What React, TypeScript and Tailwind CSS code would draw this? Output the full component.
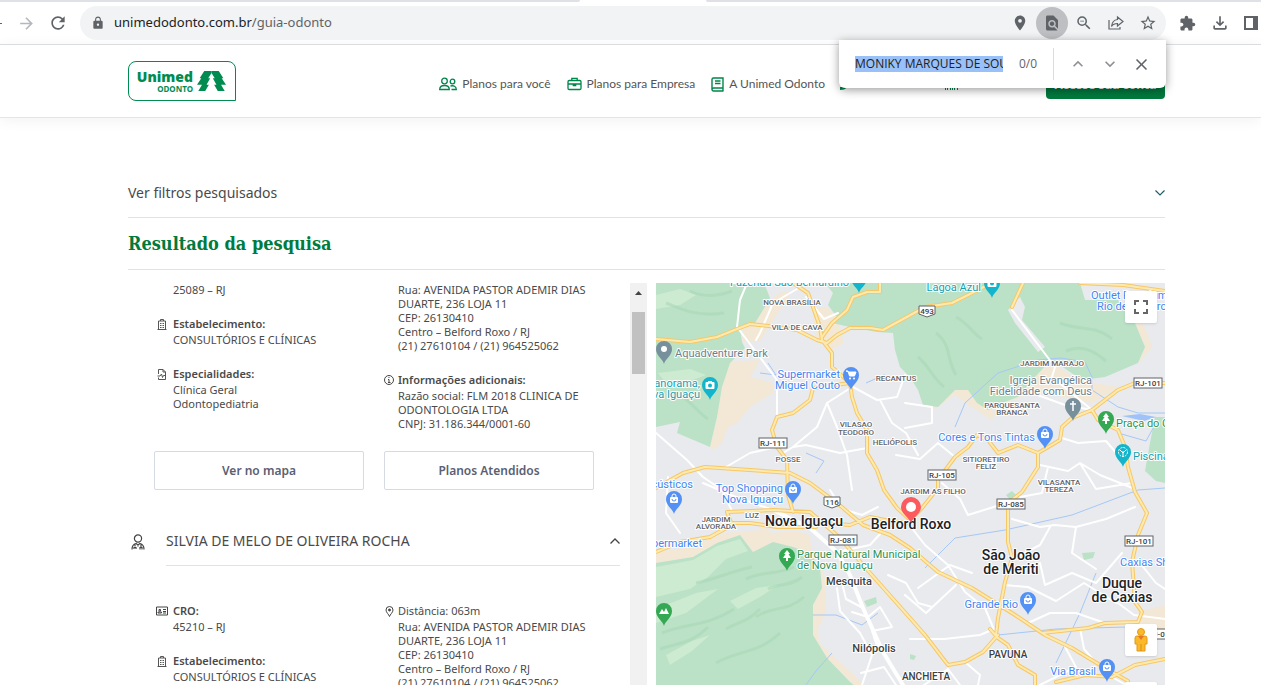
import type { ReactNode } from "react";
import {
  MdArrowForward,
  MdClose,
  MdExtension,
  MdFindInPage,
  MdFullscreen,
  MdKeyboardArrowDown,
  MdKeyboardArrowUp,
  MdLocationOn,
  MdLock,
  MdOutlineFileDownload,
  MdRefresh,
  MdStarBorder,
  MdZoomOut,
} from "react-icons/md";

const address = [
  "Rua: AVENIDA PASTOR ADEMIR DIAS",
  "DUARTE, 236 LOJA 11",
  "CEP: 26130410",
  "Centro – Belford Roxo / RJ",
  "(21) 27610104 / (21) 964525062",
];

const company = [
  "Razão social: FLM 2018 CLINICA DE",
  "ODONTOLOGIA LTDA",
  "CNPJ: 31.186.344/0001-60",
];

const greenAreas = [
  "M0 0H108L114 15L107 27L99 40L84 45L86 59L89 65L74 80L66 104L61 134L54 164L21 150L24 139L0 144Z",
  "M169 0L177 10L172 22L181 34L176 40L194 44L221 49L237 50L239 67L244 84L254 94L262 107L267 122L282 124L299 107L312 107L321 120L332 127L346 120L362 114L379 94L392 80L396 77L426 97L449 94L482 80L489 64L479 40L462 17L429 17L424 0Z",
  "M509 134L499 134L494 160L489 188L500 198L509 200Z",
  "M0 280L37 274L61 260L84 252L97 269L117 259L137 264L154 270L164 285L166 305L157 322L157 352L171 375L194 399L198 402H0Z",
  "M208 318L220 314L221 320L211 324Z",
  "M426 270L439 269L437 275L428 277Z",
  "M254 371L260 373L258 377L254 376Z",
  "M350 212L356 208L360 212L354 217Z",
];

const sandAreas = [
  "M72 79L104 77L94 94L117 100V110L94 124L81 140L72 144L66 160L57 167L54 164L61 134L66 104Z",
  "M88 45L107 27L122 10L136 8L122 30L104 58L86 59Z",
  "M156 24L172 25L181 34L188 60L176 66L160 55Z",
  "M269 120L316 100L322 117L339 130L336 137L316 124L299 112L279 126Z",
  "M376 94L396 80L422 97L462 104L436 120L409 114L376 110L349 120Z",
  "M479 40L489 64L482 82L496 64L488 42Z",
  "M0 270L31 264L71 250L104 247L107 238L115 250L140 248L154 252L155 268L168 290L170 330L162 345L163 360L185 380L208 402H198L171 375L157 352L157 322L166 305L164 285L154 270L137 264L117 259L97 269L84 252L61 260L37 274L0 280Z",
  "M480 330L509 322V352L484 345Z",
];

const lightAreas = [
  "M0 284L37 277L61 263L84 256L92 268L70 276L52 294L34 306L0 314Z",
  "M0 326L40 310L62 306L30 330L0 340Z",
  "M74 318L100 305L122 302L104 314L82 326Z",
  "M10 372L36 358L54 352L36 368L14 382Z",
  "M0 12L24 6L40 12L24 22L0 26Z",
  "M2 90L34 86L50 92L34 98L10 100Z",
];

const reliefLines = [
  "M6 350C30 340 50 344 78 326",
  "M40 300C60 296 76 288 96 284",
  "M60 380C84 366 100 372 124 350",
  "M100 334C116 322 130 330 148 314",
  "M90 296C106 288 120 292 138 284",
  "M4 366C20 360 34 362 52 344",
  "M70 346C84 338 90 340 104 326",
  "M112 306C122 300 134 304 146 294",
  "M20 110C34 116 42 130 52 136",
  "M10 20C26 26 40 34 68 30",
  "M34 8C46 14 60 14 76 8",
  "M280 50C296 62 290 76 300 92",
  "M262 74C274 84 276 94 288 104",
  "M300 34C312 40 318 52 326 56",
  "M404 40C424 48 440 42 456 56",
  "M410 68C424 62 436 66 450 78",
];

const whiteRoads = [
  "M91 0L84 17L81 44L91 57L121 97V134",
  "M141 6L117 20L104 50L100 57",
  "M196 104L171 120L161 144L137 164L127 170",
  "M171 120L181 144L191 172L196 207",
  "M197 104L221 117L241 114L249 92",
  "M224 117L236 140L250 150L262 172",
  "M211 165L184 170L150 162L137 164",
  "M0 150L31 177L47 194L66 207L76 228",
  "M70 184L94 170L121 164",
  "M12 194L10 230L24 250",
  "M47 200L80 214L117 227",
  "M249 120L276 124V140L249 145",
  "M299 174L282 160L264 176L240 172",
  "M356 27L399 84L396 94L436 127",
  "M406 155L422 160L450 158L462 172L469 176",
  "M384 182L412 188L424 180L444 192L479 206",
  "M376 110L409 122L436 127",
  "M150 14L168 36L182 30",
  "M181 269L214 262L234 240",
  "M181 305L184 328L204 350L216 372L206 402",
  "M196 329L212 334L224 324L236 344L216 348L222 366",
  "M205 390L228 384L240 402",
  "M174 207L186 226L206 232L222 224",
  "M255 244L269 262L292 282L309 309L329 325L339 349",
  "M262 305L294 282L316 290",
  "M249 312L270 330L300 302",
  "M254 356L288 356L324 352L338 346",
  "M286 200L304 216L312 232L344 222",
  "M356 236L384 244L399 242L420 244L416 270L440 286",
  "M359 275L384 262L394 244",
  "M420 244L450 236L479 224",
  "M384 280L389 302L416 290L440 300L466 270",
  "M349 302L372 304L400 318L428 300L460 320",
  "M372 340L394 330L420 330L449 340",
  "M424 345L428 366L440 380",
  "M462 320L478 332L509 336",
  "M392 184L386 210L364 214",
  "M424 180L440 206L476 200",
  "M384 402L420 384L408 362",
  "M268 402L292 386L304 402",
  "M309 379L324 392L322 402",
  "M484 280L500 300L509 306",
  "M456 394L470 402",
  "M232 292L250 300L262 320L276 324",
  "M207 325L190 316L186 300",
];

const yellowRoads = [
  "M0 56L34 59L61 54L81 46L94 41L121 44L141 47L161 57L171 60L181 52L194 45L214 45L227 47L249 35L269 24L296 20L322 7L335 0",
  "M137 0L152 10L157 24L164 44L166 57L176 70V84L194 100L196 114L201 130L211 147V170L221 187L228 207L241 225L252 235",
  "M224 0V9H211L197 14L191 27L176 40L166 54",
  "M194 100L157 105L154 117L137 130L121 134L116 147L121 164L131 177L132 212L137 229",
  "M0 205L27 190L49 184L94 187L134 190L154 200L181 220L207 242L234 252L254 265L282 289L316 305L359 332L389 352L416 365L449 385L472 398",
  "M71 229L117 227L154 229L167 240L184 255L207 282L254 335L269 352L292 382L309 379L327 369L342 352",
  "M0 269L24 259L54 254L76 242L71 229",
  "M76 240H94L121 244H160",
  "M167 240L194 242L214 234L234 238L252 240",
  "M509 100H479L462 107L436 127L416 135L406 144L404 157L382 170V184L366 209L352 220V259L356 275L349 299L342 335L340 352",
  "M436 127L442 137L462 147L469 164L472 184L479 209L491 230L482 252L476 279L479 319L486 329L482 339",
  "M255 236L266 225L282 205V197L299 174L312 164L321 152L332 157L342 170L362 162L382 170",
  "M367 0L356 24",
  "M424 0L467 2L509 8",
  "M386 350L432 345L449 340L482 339",
  "M334 346L342 355L352 362L362 382L379 392V402",
  "M400 399L429 392L456 394L479 382L509 376",
];

const rivers = [
  "M269 285L299 255L349 247L416 232L482 207L509 205",
  "M299 144L309 120L342 90L382 77L405 75L429 79L436 94V107L462 124L482 130H509",
  "M104 90L120 92L112 80",
  "M150 170L168 178L160 190",
  "M157 332L180 332L206 342L222 330",
  "M176 370L160 388L150 402",
  "M342 352L400 346L470 344L509 350",
  "M462 150L490 158L500 140",
  "M210 100L228 92L240 96",
  "M440 290L424 330L400 380",
];

type PlaceLabel = {
  x: number;
  y: number;
  text: string;
  anchor?: "start" | "middle" | "end";
};

const districts: PlaceLabel[] = [
  { x: 136, y: 22, text: "NOVA BRASÍLIA" },
  { x: 141, y: 47, text: "VILA DE CAVA" },
  { x: 240, y: 98, text: "RECANTUS" },
  { x: 200, y: 144, text: "VILASAO" },
  { x: 200, y: 152, text: "TEODORO" },
  { x: 239, y: 162, text: "HELIÓPOLIS" },
  { x: 132, y: 179, text: "POSSE" },
  { x: 396, y: 83, text: "JARDIM MARAJO" },
  { x: 356, y: 125, text: "PARQUESANTA" },
  { x: 356, y: 132, text: "BRANCA" },
  { x: 330, y: 179, text: "SITIORETIRO" },
  { x: 330, y: 186, text: "FELIZ" },
  { x: 277, y: 211, text: "JARDIM AS FILHO" },
  { x: 403, y: 202, text: "VILASANTA" },
  { x: 403, y: 209, text: "TEREZA" },
  { x: 96, y: 235, text: "LUZ" },
  { x: 60, y: 239, text: "JARDIM" },
  { x: 60, y: 246, text: "ALVORADA" },
];

const towns: PlaceLabel[] = [
  { x: 193, y: 302, text: "Mesquita" },
  { x: 218, y: 369, text: "Nilópolis" },
];

const boroughs: PlaceLabel[] = [
  { x: 270, y: 397, text: "ANCHIETA" },
  { x: 352, y: 375, text: "PAVUNA" },
];

const cities: PlaceLabel[] = [
  { x: 148, y: 243, text: "Nova Iguaçu" },
  { x: 255, y: 246, text: "Belford Roxo" },
  { x: 355, y: 277, text: "São João" },
  { x: 355, y: 291, text: "de Meriti" },
  { x: 466, y: 305, text: "Duque" },
  { x: 466, y: 319, text: "de Caxias" },
];

const shops: PlaceLabel[] = [
  { x: 184, y: 95, text: "Supermarket", anchor: "end" },
  { x: 184, y: 106, text: "Miguel Couto", anchor: "end" },
  { x: 127, y: 209, text: "Top Shopping", anchor: "end" },
  { x: 127, y: 220, text: "Nova Iguaçu", anchor: "end" },
  { x: 435, y: 16, text: "Outlet Premium", anchor: "start" },
  { x: 441, y: 27, text: "Rio de Janeiro", anchor: "start" },
  { x: 379, y: 158, text: "Cores e Tons Tintas", anchor: "end" },
  { x: 37, y: 205, text: "Acústicos", anchor: "end" },
  { x: 46, y: 264, text: "Supermarket", anchor: "end" },
  { x: 464, y: 283, text: "Caxias Shopping", anchor: "start" },
  { x: 362, y: 325, text: "Grande Rio", anchor: "end" },
  { x: 440, y: 392, text: "Via Brasil", anchor: "end" },
];

const sights: PlaceLabel[] = [
  { x: 193, y: 3, text: "Fazenda São Bernardino", anchor: "end" },
  { x: 44, y: 104, text: "Panorama,", anchor: "end" },
  { x: 44, y: 115, text: "Nova Iguaçu", anchor: "end" },
  { x: 325, y: 8, text: "Lagoa Azul", anchor: "end" },
  { x: 477, y: 177, text: "Piscina", anchor: "start" },
];

const landmarks: PlaceLabel[] = [
  { x: 19, y: 74, text: "Aquadventure Park", anchor: "start" },
  { x: 436, y: 101, text: "Igreja Evangélica", anchor: "end" },
  { x: 436, y: 112, text: "Fidelidade com Deus", anchor: "end" },
];

const parks: PlaceLabel[] = [
  { x: 460, y: 144, text: "Praça do Canal", anchor: "start" },
  { x: 141, y: 275, text: "Parque Natural Municipal", anchor: "start" },
  { x: 141, y: 286, text: "de Nova Iguaçu", anchor: "start" },
];

const roadSigns = [
  { x: 117, y: 160, text: "RJ-111" },
  { x: 286, y: 192, text: "RJ-105" },
  { x: 492, y: 100, text: "RJ-101" },
  { x: 187, y: 257, text: "RJ-081" },
  { x: 355, y: 221, text: "RJ-085" },
  { x: 483, y: 258, text: "RJ-101" },
  { x: 505, y: 351, text: "RJ-071" },
];

const highways = [
  { x: 271, y: 28, text: "493" },
  { x: 176, y: 219, text: "116" },
];

const glyphs = {
  dot: <circle r="3" fill="#fff" />,
  bag: (
    <>
      <rect x="-4" y="-2" width="8" height="6" rx="1" fill="#fff" />
      <path d="M-2 -2V-3A2 2 0 0 1 2 -3V-2" fill="none" stroke="#fff" />
      <path d="M-2 0A2 2 0 0 0 2 0" fill="none" stroke="#5491f5" />
    </>
  ),
  cart: (
    <>
      <path d="M-5 -4H-3L-1.5 1H3.5L5 -3H-2.5Z" fill="#fff" stroke="#fff" />
      <circle cx="-1" cy="3.5" r="1" fill="#fff" />
      <circle cx="3" cy="3.5" r="1" fill="#fff" />
    </>
  ),
  camera: (
    <>
      <rect x="-4.5" y="-3" width="9" height="7" rx="1" fill="#fff" />
      <rect x="-2" y="-4" width="4" height="2" fill="#fff" />
      <circle cy="0.5" r="2" fill="#12b5cb" />
    </>
  ),
  cross: <path d="M0 -5V5M-3 -2H3" stroke="#fff" strokeWidth="1.5" />,
  tree: <path d="M0 -6L3 -2H1.5L4 2H1V5H-1V2H-4L-1.5 -2H-3Z" fill="#fff" />,
  peak: <path d="M-5 3L-2 -2L0 1L2 -3L5 3Z" fill="#fff" />,
  fan: (
    <>
      <circle r="4.5" fill="none" stroke="#fff" strokeDasharray="2 1" />
      <path d="M0 5V-1M0 1L-3 -2M0 1L3 -2" stroke="#fff" fill="none" />
    </>
  ),
};

const pins: { x: number; y: number; color: string; glyph: keyof typeof glyphs }[] = [
  { x: 8, y: 66, color: "#78909c", glyph: "dot" },
  { x: 54, y: 102, color: "#12b5cb", glyph: "camera" },
  { x: 195, y: 92, color: "#5491f5", glyph: "cart" },
  { x: 203, y: -5, color: "#12b5cb", glyph: "camera" },
  { x: 336, y: 0, color: "#12b5cb", glyph: "camera" },
  { x: 417, y: 123, color: "#78909c", glyph: "cross" },
  { x: 450, y: 136, color: "#34a853", glyph: "tree" },
  { x: 389, y: 151, color: "#5491f5", glyph: "bag" },
  { x: 467, y: 169, color: "#12b5cb", glyph: "fan" },
  { x: 137, y: 206, color: "#5491f5", glyph: "bag" },
  { x: 18, y: 216, color: "#5491f5", glyph: "bag" },
  { x: 131, y: 273, color: "#34a853", glyph: "tree" },
  { x: 8, y: 328, color: "#34a853", glyph: "peak" },
  { x: 372, y: 317, color: "#5491f5", glyph: "bag" },
  { x: 451, y: 384, color: "#5491f5", glyph: "bag" },
];

function Labels({ items, className }: { items: PlaceLabel[]; className: string }) {
  return (
    <g className={className}>
      {items.map((l) => (
        <text key={`${l.text}-${l.y}`} x={l.x} y={l.y} textAnchor={l.anchor ?? "middle"}>
          {l.text}
        </text>
      ))}
    </g>
  );
}

function RegionMap() {
  return (
    <svg
      viewBox="0 0 509 402"
      preserveAspectRatio="xMinYMin slice"
      role="img"
      aria-label="Mapa"
      className="block h-full w-full bg-[#e8eaed] font-[Roboto,sans-serif]"
    >
      <rect width="509" height="402" fill="#e8eaed" />
      <path d={sandAreas.join("")} fill="#f2e8d5" />
      <path d={greenAreas.join("")} fill="#bbe2c6" />
      <path d="M352 27L364 14L369 24L366 37L389 64L382 69L359 40Z" fill="#e8eaed" />
      <path d={lightAreas.join("")} fill="#cdebd0" />
      <path d={reliefLines.join("")} fill="none" stroke="#a8d8b8" strokeWidth="3" opacity="0.6" />
      <path d="M466 133L484 131L500 134L488 138Z" fill="#9fc3f8" />
      <path d={rivers.join("")} fill="none" stroke="#a6c7f7" strokeWidth="1" />
      <g fill="none" strokeLinejoin="round" strokeLinecap="round">
        <path d={whiteRoads.join("")} stroke="#fff" strokeWidth="2" />
        <path d="M117 227L154 245L181 269L194 292L207 325L227 369L247 402" stroke="#fff" strokeWidth="4" />
        <path d={yellowRoads.join("")} stroke="#f8c765" strokeWidth="4" />
        <path d={yellowRoads.join("")} stroke="#fdeab0" strokeWidth="2" />
      </g>

      {roadSigns.map((s) => (
        <g key={`${s.text}-${s.y}`}>
          <rect x={s.x - 14} y={s.y - 5} width="28" height="10" fill="#fff" stroke="#5f6368" />
          <text x={s.x} y={s.y + 3} textAnchor="middle" className="fill-[#3c4043] text-[8px] font-medium">
            {s.text}
          </text>
        </g>
      ))}
      {highways.map((h) => (
        <g key={h.text}>
          <path
            d={`M${h.x - 8} ${h.y - 5}H${h.x + 8}V${h.y + 3}L${h.x} ${h.y + 6}L${h.x - 8} ${h.y + 3}Z`}
            fill="#fff"
            stroke="#5f6368"
          />
          <text x={h.x} y={h.y + 3} textAnchor="middle" className="fill-[#3c4043] text-[8px] font-medium">
            {h.text}
          </text>
        </g>
      ))}

      {pins.map((p) => (
        <g key={`${p.x}-${p.y}`} transform={`translate(${p.x} ${p.y})`}>
          <path d="M0 15C-1 10 -8 7 -8 0A8 8 0 0 1 8 0C8 7 1 10 0 15Z" fill={p.color} />
          {glyphs[p.glyph]}
        </g>
      ))}

      <g stroke="#fff" strokeWidth="2" strokeLinejoin="round" className="[paint-order:stroke]">
        <Labels items={districts} className="fill-[#5f6368] text-[8px] font-medium" />
        <Labels items={boroughs} className="fill-[#3c4043] text-[10px] font-medium" />
        <Labels items={towns} className="fill-[#3c4043] text-[11px] font-medium" />
        <Labels items={cities} className="fill-[#202124] text-[14px] font-medium" />
        <Labels items={shops} className="fill-[#4285f4] text-[11px]" />
        <Labels items={sights} className="fill-[#129eaf] text-[11px]" />
        <Labels items={landmarks} className="fill-[#6b7f8d] text-[11px]" />
        <Labels items={parks} className="fill-[#2e9150] text-[11px]" />
      </g>

      <path d="M255 240C253 234 245 231 245 224A10 10 0 0 1 265 224C265 231 257 234 255 240Z" fill="#fb5a5f" />
      <circle cx="255" cy="224" r="5" fill="#fff" />
    </svg>
  );
}

function Logo() {
  return (
    <a
      href="#inicio"
      aria-label="Unimed Odonto"
      className="flex h-10 w-[108px] items-center gap-1 rounded-t-lg rounded-bl-lg border border-[#008c50] pl-2 text-[#008c50]"
    >
      <span className="flex w-14 flex-col items-end font-['Noto_Sans']">
        <span className="text-[14px] leading-[14px] font-black">Unimed</span>
        <span className="text-[8px] leading-[9px] font-bold">ODONTO</span>
      </span>
      <svg viewBox="0 0 88 60" className="h-5 w-[29px]" fill="currentColor">
        <path d="M22 0H44V6L34 22H40L29 41H36L25 60H4L15 41H0L13 22H8Z" />
        <path d="M66 0H44V6L54 22H48L59 41H52L63 60H84L73 41H88L75 22H80Z" />
      </svg>
    </a>
  );
}

function PeopleIcon() {
  return (
    <svg viewBox="0 0 18 14" className="h-3.5 w-[18px]" fill="none" stroke="#00854a" strokeWidth="1.3">
      <circle cx="5.5" cy="4" r="2.8" />
      <path d="M.7 12.5C.7 9.5 2.5 8.5 5.5 8.5S10.3 9.5 10.3 12.5Z" />
      <circle cx="13.5" cy="4.5" r="2.3" />
      <path d="M11.5 9C14.5 8.2 17.3 9.2 17.3 12.5H12.5" />
    </svg>
  );
}

function BriefcaseIcon() {
  return (
    <svg viewBox="0 0 15 14" className="h-3.5 w-[15px]" fill="none" stroke="#00854a" strokeWidth="1.3">
      <rect x="1" y="3.5" width="13" height="9" rx="1.2" />
      <path d="M4.8 3.5V1.3H10.2V3.5M1 7H14M6.3 7V8.5H8.7V7" />
    </svg>
  );
}

function BookIcon() {
  return (
    <svg viewBox="0 0 13 15" className="h-[15px] w-[13px]" fill="none" stroke="#00854a" strokeWidth="1.4">
      <path d="M12 11V1H2.5A1.5 1.5 0 0 0 1 2.5V12.5A1.5 1.5 0 0 0 2.5 14H12.5M1 12.5A1.5 1.5 0 0 1 2.5 11H12V14M4 4H9.5M4 6.5H9.5" />
    </svg>
  );
}

function DoctorIcon() {
  return (
    <svg viewBox="0 0 14 16" className="h-4 w-3.5" fill="none" stroke="#444" strokeWidth="1.2">
      <circle cx="7" cy="4.5" r="3.6" />
      <path d="M1 15.5C1 11.5 3 10 5 9.5L7 11L9 9.5C11 10 13 11.5 13 15.5M4 10.5V12.5M10 10.5V13M3 15V13.5H5V15M7 11V12.5M9 15.5V13.5H11V15.5" />
    </svg>
  );
}

function CardIcon() {
  return (
    <svg viewBox="0 0 12 10" className="h-2.5 w-3" fill="none" stroke="#444">
      <path d="M.5 1H11.5V9H.5Z" />
      <path d="M2 7H5.5V6H2ZM3 3.5H4.5V5H3ZM7 3.5H10M7 5.5H10M7 7H10" />
    </svg>
  );
}

function BuildingIcon() {
  return (
    <svg viewBox="0 0 10 11" className="h-[11px] w-2.5" fill="none" stroke="#555">
      <path d="M1.5 10.5V2H8.5V10.5M.5 10.5H9.5M3.5 2V.5H6.5V2" />
      <path d="M3 4.5H4.5M5.5 4.5H7M3 6.5H4.5M5.5 6.5H7M3 8.5H4.5M5.5 8.5H7" />
    </svg>
  );
}

function ReportIcon() {
  return (
    <svg viewBox="0 0 10 11" className="h-[11px] w-2.5" fill="none" stroke="#555">
      <path d="M1.5 5V.5H6L8.5 3V10.5H1.5V8.5M6 .5V3H8.5M.5 7H3L4.5 5L5.5 8.5L6.5 6.5H8" />
    </svg>
  );
}

function InfoIcon() {
  return (
    <svg viewBox="0 0 10 10" className="size-2.5" fill="none" stroke="#444">
      <circle cx="5" cy="5" r="4.5" />
      <path d="M4 4.5H5V7.5M4 7.5H6.5M4.5 2.5H5.5" />
    </svg>
  );
}

function PinIcon() {
  return (
    <svg viewBox="0 0 9 11" className="h-[11px] w-[9px]" fill="none" stroke="#444">
      <path d="M4.5 10.5C4 8.5 1 6.5 1 4A3.5 3.5 0 0 1 8 4C8 6.5 5 8.5 4.5 10.5Z" />
      <circle cx="4.5" cy="4" r="1" fill="#444" />
    </svg>
  );
}

type DetailProps = {
  icon: ReactNode;
  label: string;
  lines: string[];
  wide?: boolean;
  plain?: boolean;
};

function Detail({ icon, label, lines, wide, plain }: DetailProps) {
  return (
    <div className="flex gap-1">
      <span className={`flex h-[18px] shrink-0 items-center justify-center ${wide ? "w-[15px]" : "w-2.5"}`}>
        {icon}
      </span>
      <div>
        <h4 className={`leading-[18px] ${plain ? "font-normal" : "font-semibold"}`}>{label}</h4>
        {lines.map((line) => (
          <p key={line} className="leading-[14px] whitespace-nowrap">
            {line}
          </p>
        ))}
      </div>
    </div>
  );
}

function Details({ cro, specialties }: { cro: string; specialties: string[] }) {
  return (
    <div className="mr-9 ml-[26px] grid grid-cols-2 gap-5 text-[11px] text-[#4a4a4a]">
      <div className="flex flex-col gap-[18px]">
        <Detail wide icon={<CardIcon />} label="CRO:" lines={[cro]} />
        <Detail wide icon={<BuildingIcon />} label="Estabelecimento:" lines={["CONSULTÓRIOS E CLÍNICAS"]} />
        <Detail wide icon={<ReportIcon />} label="Especialidades:" lines={specialties} />
      </div>
      <div className="flex flex-col gap-[18px]">
        <Detail plain icon={<PinIcon />} label="Distância: 063m" lines={address} />
        <Detail icon={<InfoIcon />} label="Informações adicionais:" lines={company} />
      </div>
    </div>
  );
}

function Results() {
  const button =
    "h-[39px] rounded-xs border border-[#d5dae3] bg-white text-xs font-semibold text-[#5a6072]";
  return (
    <div className="flex min-h-0 overflow-hidden">
      <div className="min-w-0 flex-1 overflow-hidden">
        <div className="-mt-[18px]">
          <Details cro="25089 – RJ" specialties={["Clínica Geral", "Odontopediatria"]} />
        </div>
        <div className="mt-5 mr-9 ml-[26px] grid grid-cols-2 gap-5">
          <button className={button}>Ver no mapa</button>
          <button className={button}>Planos Atendidos</button>
        </div>
        <button className="mt-[27px] flex w-full items-center pr-2.5 pl-[3px] text-left text-[#4a4a4a]">
          <DoctorIcon />
          <span className="ml-[21px] flex h-[49px] flex-1 items-center justify-between border-b border-[#e2e2e2] text-sm">
            SILVIA DE MELO DE OLIVEIRA ROCHA
            <svg viewBox="0 0 10 6" className="h-1.5 w-2.5" fill="none" stroke="#444" strokeWidth="1.3">
              <path d="M.5 5.5L5 1L9.5 5.5" />
            </svg>
          </span>
        </button>
        <div className="mt-9">
          <Details cro="45210 – RJ" specialties={["Clínica Geral"]} />
        </div>
      </div>
      <div className="flex w-[17px] flex-col items-center bg-[#f1f1f1]">
        <svg viewBox="0 0 7 4" className="mt-2 h-1 w-[7px]" fill="#444">
          <path d="M0 4L3.5 0L7 4Z" />
        </svg>
        <div className="mt-[17px] h-[62px] w-[13px] bg-[#c1c1c1]" />
      </div>
    </div>
  );
}

function FindBar() {
  return (
    <div className="absolute top-10 right-[95px] z-10 flex h-12 w-[327px] items-center rounded-b-md bg-white pl-4 text-xs text-[#5f6368] shadow-[0_2px_10px_rgba(0,0,0,0.4)]">
      <input
        aria-label="Localizar na página"
        defaultValue="MONIKY MARQUES DE SOU"
        className="h-4 w-[148px] bg-[#9ac1f7] text-[#202124] outline-none"
      />
      <span className="ml-4">0/0</span>
      <span className="ml-auto h-8 w-px bg-[#dadce0]" />
      <button aria-label="Anterior" className="ml-3.5 text-[#8d9094]">
        <MdKeyboardArrowUp size={20} />
      </button>
      <button aria-label="Próximo" className="ml-3 text-[#8d9094]">
        <MdKeyboardArrowDown size={20} />
      </button>
      <button aria-label="Fechar" className="mr-[15px] ml-3">
        <MdClose size={19} />
      </button>
    </div>
  );
}

function BrowserBar() {
  return (
    <div className="relative shrink-0 font-['Open_Sans',sans-serif]">
      <div className="flex h-0.5 justify-between">
        <div className="w-[46%] rounded-br bg-[#dee1e6]" />
        <div className="w-[44%] rounded-bl bg-[#dee1e6]" />
      </div>
      <div className="flex h-[43px] items-center border-b border-[#dadce0] text-[#5f6368]">
        <span className="h-px w-0.5 bg-[#5f6368]" />
        <button aria-label="Avançar" className="ml-[15px] text-[#b5b7ba]">
          <MdArrowForward size={19} />
        </button>
        <button aria-label="Recarregar" className="ml-3">
          <MdRefresh size={20} />
        </button>
        <div className="ml-3 flex h-[34px] flex-1 items-center rounded-full bg-[#f1f3f4] pr-0.5 pl-[11px]">
          <MdLock size={14} />
          <p className="ml-[9px] flex-1 font-['Noto_Sans',sans-serif] text-[13px]">
            <span className="text-[#202124]">unimedodonto.com.br</span>
            <span>/guia-odonto</span>
          </p>
          <button aria-label="Localização" className="px-[7px]">
            <MdLocationOn size={18} />
          </button>
          <button
            aria-label="Localizar"
            className="flex size-8 items-center justify-center rounded-full bg-[#bdbfc2]"
          >
            <MdFindInPage size={18} />
          </button>
          <button aria-label="Zoom" className="px-[7px]">
            <MdZoomOut size={18} />
          </button>
          <button aria-label="Compartilhar" className="px-2">
            <svg viewBox="0 0 16 16" className="size-4" fill="none" stroke="currentColor" strokeWidth="1.2">
              <path d="M1 5V14H12V12M9.5 2L15 6.5L9.5 11V8.5C7 8.5 5 9 3.5 11.5C4 7 6 4.8 9.5 4.5Z" />
            </svg>
          </button>
          <button aria-label="Favoritos" className="px-[7px]">
            <MdStarBorder size={18} />
          </button>
        </div>
        <div className="flex w-[95px] items-center gap-3.5 pl-[13px]">
          <MdExtension size={17} />
          <MdOutlineFileDownload size={20} />
          <svg viewBox="0 0 14 14" className="size-3.5 shrink-0" fill="currentColor">
            <path d="M0 0H14V14H0ZM2 2V12H9V2Z" fillRule="evenodd" />
          </svg>
        </div>
      </div>
      <FindBar />
    </div>
  );
}

function SiteHeader() {
  return (
    <header className="flex h-[73px] shrink-0 items-center border-b border-[#e4e5e8] pr-24 pl-32 shadow-[0_2px_14px_rgba(0,0,0,0.06)]">
      <Logo />
      <nav className="ml-auto flex items-center gap-4 pt-1.5 font-['Lato',sans-serif] text-xs text-[#555] *:flex *:items-center *:gap-[5px]">
        <a href="#voce">
          <PeopleIcon /> Planos para você
        </a>
        <a href="#empresa">
          <BriefcaseIcon /> Planos para Empresa
        </a>
        <a href="#unimed">
          <BookIcon /> A Unimed Odonto
        </a>
      </nav>
      <div className="mb-[18px] ml-[15px] flex w-[325px] items-center justify-between self-end">
        <svg viewBox="0 0 118 16" className="h-4 w-[118px]" fill="#00854a">
          <path d="M0 10H8L4 12.5L0 13Z" />
          <path d="M105 11H106V13H105ZM107 11H108V13H107ZM110 11H111V13H110ZM112 11H113V13H112ZM114 11H115V13H114ZM117 11H118V13H117Z" />
        </svg>
        <a
          href="#conta"
          className="flex h-7 w-[119px] items-center justify-center rounded-sm bg-[#007a3d] text-xs font-bold text-white"
        >
          Acesse sua conta
        </a>
      </div>
    </header>
  );
}

export default function App() {
  return (
    <div className="flex h-screen flex-col overflow-hidden bg-white font-['Noto_Sans',sans-serif]">
      <BrowserBar />
      <SiteHeader />
      <main className="mr-24 ml-32 flex min-h-0 flex-1 flex-col pt-[51px]">
        <button className="flex h-[49px] shrink-0 items-center justify-between border-b border-[#e2e2e2] text-sm text-[#4a4a4a]">
          Ver filtros pesquisados
          <svg viewBox="0 0 10 6" className="h-1.5 w-2.5" fill="none" stroke="#1d5f66" strokeWidth="1.2">
            <path d="M.5 .5L5 5L9.5 .5" />
          </svg>
        </button>
        <h2 className="flex h-[52px] shrink-0 items-center border-b border-[#e2e2e2] font-['DejaVu_Serif_Condensed','DejaVu_Serif',serif] text-lg font-bold text-[#007a3d]">
          Resultado da pesquisa
        </h2>
        <div className="mt-[13px] grid min-h-0 flex-1 grid-cols-[519fr_509fr] grid-rows-1 gap-[9px]">
          <Results />
          <div className="relative min-h-0 overflow-hidden">
            <RegionMap />
            <button
              aria-label="Tela cheia"
              className="absolute top-2 right-2 flex size-8 items-center justify-center rounded-xs bg-white text-[#666] shadow"
            >
              <MdFullscreen size={24} />
            </button>
            <div className="absolute top-[341px] right-2 flex flex-col gap-[26px]">
              <button
                aria-label="Street View"
                className="flex size-8 items-center justify-center rounded-xs bg-white shadow"
              >
                <svg viewBox="0 0 14 24" className="h-6 w-3.5">
                  <path d="M1 10Q1 8 3 8H11Q13 8 13 10V16H11V23H3V16H1Z" fill="#fbb829" stroke="#e09a1a" />
                  <path d="M4 8H10L7 12Z" fill="#e5762b" />
                  <path d="M7 16V23" stroke="#d98f17" />
                  <circle cx="7" cy="4" r="3.5" fill="#fbb829" stroke="#e09a1a" />
                </svg>
              </button>
              <button aria-label="Aumentar zoom" className="size-8 rounded-xs bg-white shadow" />
            </div>
          </div>
        </div>
      </main>
    </div>
  );
}
